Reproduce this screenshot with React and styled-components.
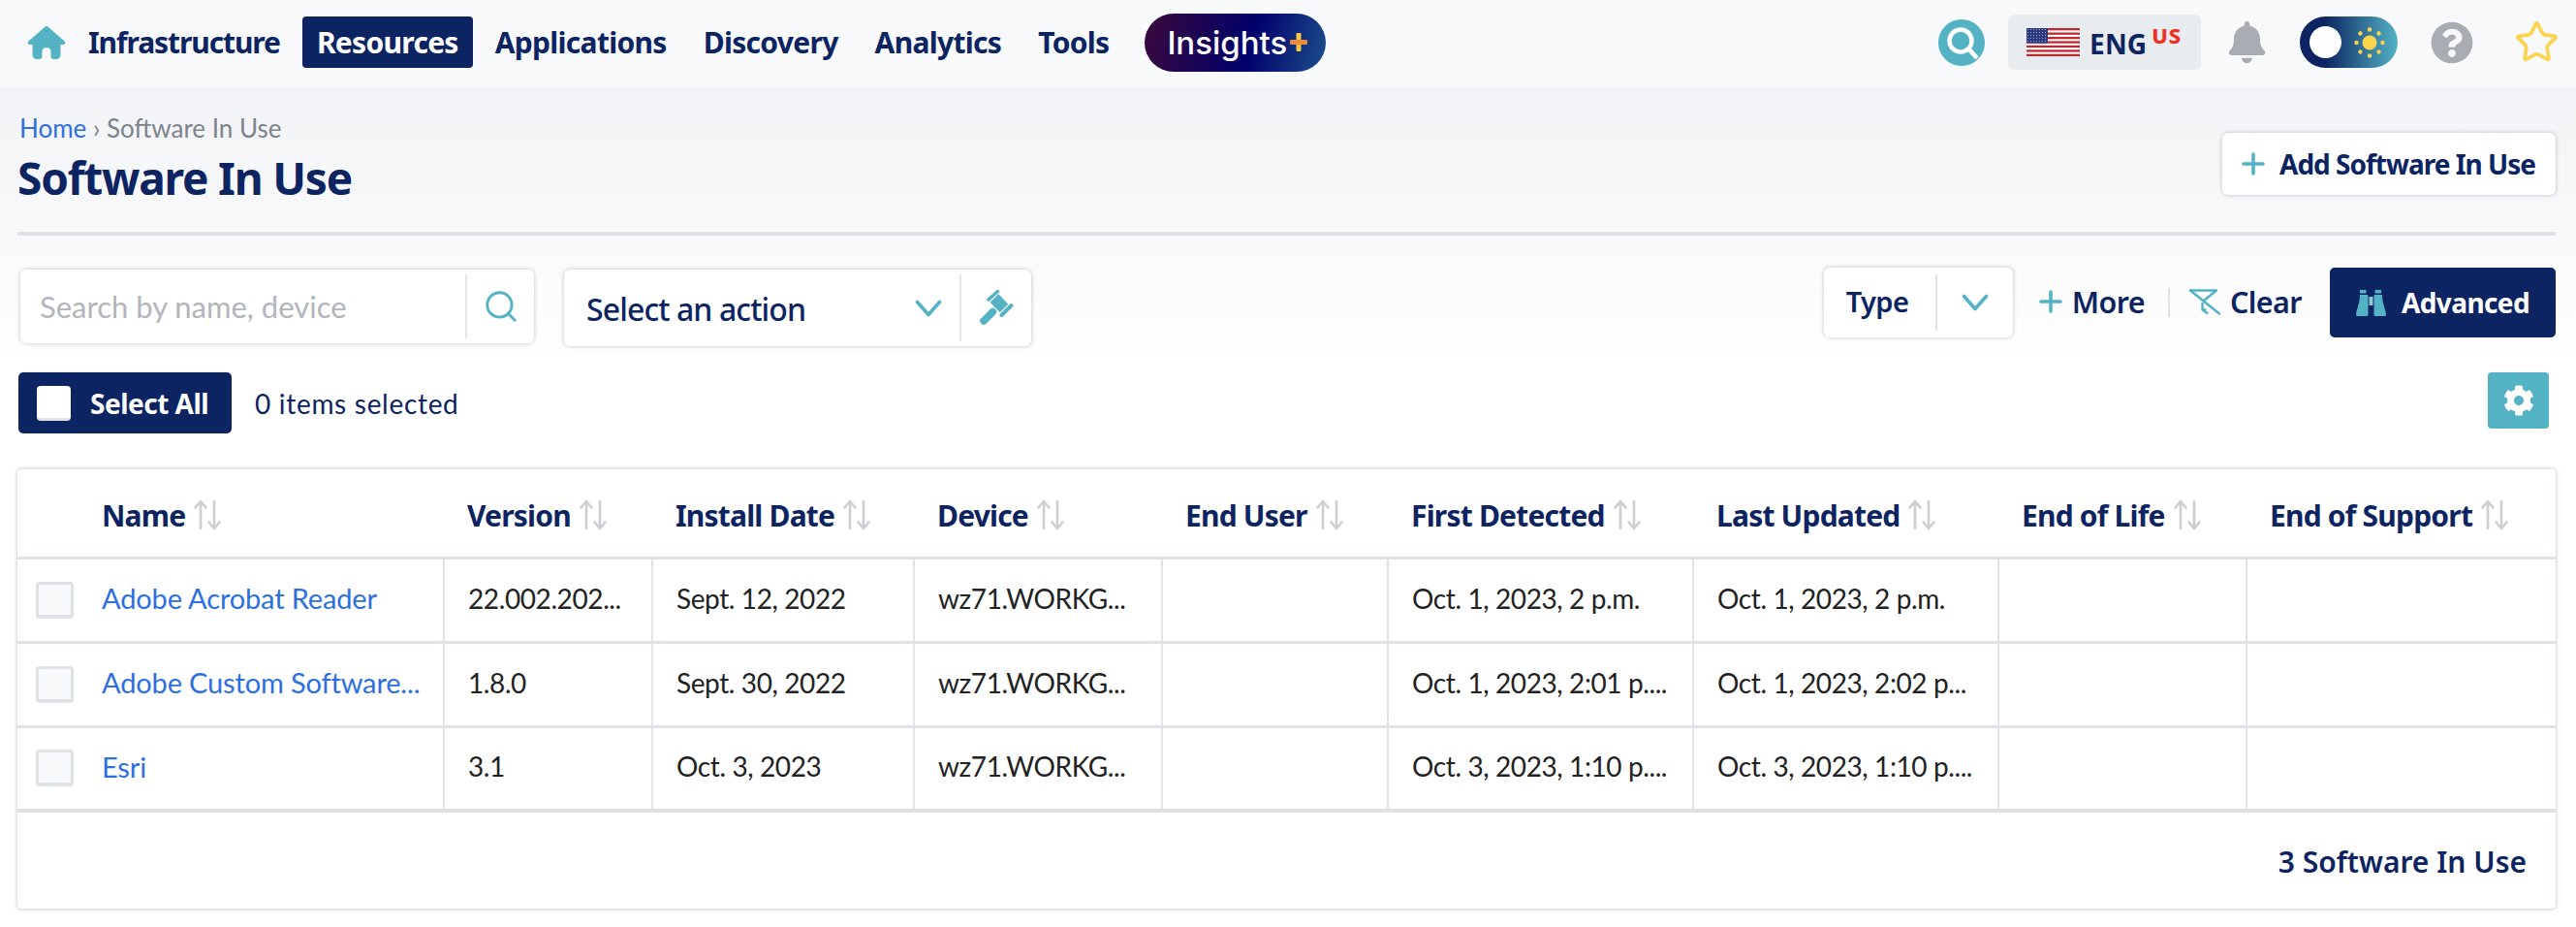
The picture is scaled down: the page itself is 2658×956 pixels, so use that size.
import styled, { createGlobalStyle } from "styled-components";
import { FaBell, FaQuestionCircle, FaCog } from "react-icons/fa";
import { Search, Star } from "lucide-react";

const HEAD = `"Noto Sans", "Open Sans", sans-serif`;
const BODY = `Lato, "Liberation Sans", sans-serif`;
const NAVY = "#0c2461";
const TEAL = "#53b3c5";
const LINE = "#e1e3e8";

const GlobalStyle = createGlobalStyle`
  html, body {
    margin: 0;
    background: #fff;
  }
  * {
    box-sizing: border-box;
  }
`;

const Page = styled.div`
  width: 2658px;
  height: 956px;
  overflow: hidden;
  background: linear-gradient(#f2f3f6 90px, #ffffff 380px);
  font-family: ${BODY};
  color: #222;
`;

const TopBar = styled.nav`
  height: 90px;
  background: #f8f9fb;
  display: flex;
  align-items: center;
  padding: 0 21px 3px 28px;
`;

const NavLinks = styled.div`
  display: flex;
  align-items: center;
  gap: 8px;
  margin-left: 8px;
`;

const NavLink = styled.a`
  height: 53px;
  padding: 0 15px;
  display: flex;
  align-items: center;
  border-radius: 4px;
  font: 700 30px ${HEAD};
  letter-spacing: ${(p) => p.$ls || -0.7}px;
  white-space: nowrap;
  color: ${(p) => (p.$active ? "#fff" : NAVY)};
  background: ${(p) => (p.$active ? NAVY : "transparent")};
`;

const InsightsPill = styled.a`
  width: 187px;
  height: 60px;
  margin-left: 22px;
  border-radius: 30px;
  display: flex;
  align-items: center;
  justify-content: center;
  gap: 3px;
  padding-left: 4px;
  background: linear-gradient(105deg, #36083f 5%, #00006b 58%, #1d4f8c 100%);
  color: #fff;
  font: 500 33px Inter, ${BODY};
`;

const TopRight = styled.div`
  margin-left: auto;
  display: flex;
  align-items: center;
`;

const LangBox = styled.div`
  width: 199px;
  height: 57px;
  margin: 0 26px 0 24px;
  padding-left: 19px;
  display: flex;
  align-items: center;
  gap: 10px;
  border-radius: 6px;
  background: #e9ecef;
`;

const LangText = styled.span`
  font: 700 28px ${HEAD};
  color: ${NAVY};
  letter-spacing: 0.2px;
`;

const LangSup = styled.sup`
  font: 800 22px ${HEAD};
  color: #ee3124;
  letter-spacing: 0.8px;
  margin-left: 5px;
  position: relative;
  top: -1px;
`;

const BellWrap = styled.span`
  display: flex;
  color: #a9adb3;
  font-size: 43px;
`;

const Toggle = styled.div`
  width: 101px;
  height: 53px;
  margin: 0 34px 0 33px;
  padding: 0 13px 0 10px;
  border-radius: 27px;
  display: flex;
  align-items: center;
  justify-content: space-between;
  background: linear-gradient(90deg, #0c2461 25%, #53b3c5 100%);
`;

const Knob = styled.span`
  width: 33px;
  height: 33px;
  border-radius: 50%;
  background: #fff;
`;

const HelpWrap = styled.span`
  display: flex;
  color: #a9adb3;
  font-size: 44px;
  margin-right: 46px;
`;

const StarWrap = styled.span`
  display: flex;
  margin: 0 -4px;
`;

const Main = styled.main`
  padding: 0 21px 0 18px;
`;

const TitleRow = styled.header`
  height: 153px;
  padding: 28px 0 0 2px;
  display: flex;
  justify-content: space-between;
  border-bottom: 4px solid #e0e1e6;
`;

const Breadcrumb = styled.div`
  font: 400 26px ${BODY};
  color: #7c848c;
  height: 28px;
  line-height: 28px;
`;

const BreadcrumbLink = styled.a`
  color: #2d6fe0;
`;

const PageTitle = styled.h1`
  margin: 12px 0 0 -2px;
  font: 700 46px/50px ${HEAD};
  letter-spacing: -1.2px;
  color: ${NAVY};
`;

const WhiteBox = styled.div`
  background: #fff;
  border-radius: 6px;
  box-shadow: 0 0 4px rgba(40, 50, 70, 0.3);
  display: flex;
  align-items: center;
`;

const AddButton = styled(WhiteBox)`
  width: 344px;
  height: 64px;
  margin-top: 19px;
  padding-left: 20px;
  gap: 15px;
  font: 700 28px ${HEAD};
  letter-spacing: -1px;
  color: ${NAVY};
`;

const Toolbar = styled.div`
  margin-top: 33px;
  height: 81px;
  display: flex;
  align-items: flex-start;
`;

const SearchBox = styled(WhiteBox)`
  width: 530px;
  height: 76px;
  margin: 2px 0 0 3px;
`;

const Placeholder = styled.span`
  flex: 1;
  padding-left: 20px;
  font: 400 31px ${BODY};
  color: #b2b5bb;
`;

const Divider = styled.span`
  width: 2px;
  align-self: stretch;
  margin: ${(p) => p.$m || "5px 0"};
  background: #e3e4e8;
`;

const SearchIcon = styled.span`
  width: 69px;
  display: flex;
  justify-content: center;
  color: ${TEAL};
`;

const ActionBox = styled(WhiteBox)`
  width: 482px;
  height: 79px;
  margin: 2px 0 0 31px;
  padding-left: 23px;
`;

const ActionLabel = styled.span`
  flex: 1;
  padding-top: 2px;
  font: 500 32px ${HEAD};
  letter-spacing: -0.9px;
  color: ${NAVY};
`;

const IconCell = styled.span`
  display: flex;
  justify-content: center;
  width: ${(p) => p.$w}px;
  color: ${TEAL};
`;

const FilterGroup = styled.div`
  margin-left: auto;
  display: flex;
  align-items: center;
  height: 72px;
`;

const TypeBox = styled(WhiteBox)`
  width: 195px;
  height: 72px;
  padding-left: 23px;
`;

const TypeLabel = styled.span`
  flex: 1;
  padding-bottom: 3px;
  font: 600 29px ${HEAD};
  letter-spacing: -0.6px;
  color: ${NAVY};
`;

const TextButton = styled.span`
  display: flex;
  align-items: center;
  gap: 10px;
  padding-bottom: 2px;
  font: 600 30.5px ${HEAD};
  letter-spacing: -0.6px;
  color: ${NAVY};
`;

const MoreButton = styled(TextButton)`
  margin-left: 27px;
`;

const VRule = styled.span`
  width: 2px;
  height: 30px;
  margin: 0 20px 0 24px;
  background: #dfe1e6;
`;

const AdvancedButton = styled.button`
  width: 233px;
  height: 72px;
  margin-left: 29px;
  border: 0;
  border-radius: 5px;
  display: flex;
  align-items: center;
  justify-content: center;
  gap: 16px;
  background: ${NAVY};
  color: #fff;
  font: 700 28px ${HEAD};
  letter-spacing: -0.6px;
`;

const SelectionRow = styled.div`
  margin-top: 27px;
  height: 63px;
  display: flex;
  align-items: center;
`;

const SelectAll = styled.div`
  width: 220px;
  height: 63px;
  margin-left: 1px;
  padding-left: 19px;
  border-radius: 5px;
  display: flex;
  align-items: center;
  gap: 20px;
  background: ${NAVY};
  color: #fff;
  font: 700 28px ${HEAD};
  letter-spacing: -0.5px;
`;

const SelectCheck = styled.span`
  width: 35px;
  height: 36px;
  border-radius: 4px;
  background: #fff;
  border-bottom: 3px solid #dee2e6;
`;

const SelectedCount = styled.span`
  margin-left: 24px;
  font: 400 28px ${BODY};
  letter-spacing: 0.7px;
  color: ${NAVY};
`;

const GearButton = styled.div`
  width: 63px;
  height: 58px;
  margin: 0 7px 5px auto;
  border-radius: 4px;
  display: flex;
  align-items: center;
  justify-content: center;
  background: ${TEAL};
  color: #fff;
  font-size: 32px;
`;

const TableCard = styled.section`
  margin-top: 37px;
  height: 453px;
  background: #fff;
  border-radius: 4px;
  box-shadow: 0 0 4px rgba(40, 50, 70, 0.35);
  display: flex;
  flex-direction: column;
`;

const Table = styled.table`
  width: 100%;
  table-layout: fixed;
  border-collapse: collapse;
`;

const HeadCell = styled.th`
  height: 91px;
  padding: 5px 0 0 ${(p) => p.$pad || 24}px;
  text-align: left;
  font: 700 30px ${HEAD};
  letter-spacing: -0.8px;
  color: ${NAVY};
  white-space: nowrap;
  border-bottom: 3px solid #dee2e6;
`;

const HeadInner = styled.span`
  display: flex;
  align-items: center;
  gap: 8px;
`;

const Row = styled.tr`
  height: 87px;
  border-bottom: ${(p) => (p.$last ? 4 : 3)}px solid #dee2e6;
`;

const Cell = styled.td`
  padding: 0 0 4px 24px;
  font: 400 28px ${BODY};
  letter-spacing: -0.4px;
  color: #222;
  white-space: nowrap;
  overflow: hidden;
  border-left: 2px solid ${LINE};
`;

const NameCell = styled.td`
  padding: 0 0 0 19px;
  white-space: nowrap;
  overflow: hidden;
`;

const NameInner = styled.span`
  display: flex;
  align-items: center;
  gap: 29px;
`;

const RowCheck = styled.span`
  width: 39px;
  height: 38px;
  flex: none;
  border-radius: 4px;
  background: #f8f9fa;
  border: 3px solid #dee2e6;
  border-bottom-width: 4px;
`;

const NameLink = styled.a`
  margin-bottom: 4px;
  font: 400 29px ${BODY};
  letter-spacing: -0.15px;
  color: #2d6fe0;
`;

const TableFooter = styled.div`
  flex: 1;
  display: flex;
  align-items: center;
  justify-content: flex-end;
  padding: 2px 30px 0 0;
  font: 600 30px ${HEAD};
  color: ${NAVY};
`;

const SortArrows = () => (
  <svg width="30" height="32" viewBox="0 0 30 32" fill="none" strokeWidth="2.6" strokeLinecap="round" strokeLinejoin="round" stroke="#ccced2">
    <path d="M8 30V2M2.500 8.500 8 2l5.500 6.500" />
    <path d="M22 2v28M16.500 23.500 22 30l5.500-6.500" />
  </svg>
);

const HomeIcon = () => (
  <svg width="40" height="34" viewBox="0 0 40 34" fill={TEAL}>
    <path d="M18.500 0.800a2 2 0 0 1 3 0L38.600 15.500c1.200 1.200 0.500 3.500-1.500 3.500H34.500V29c0 3-2 5-5 5h-2c-1.700 0-3-1.300-3-3v-5c0-2.500-2-4-4.500-4s-4.500 1.500-4.500 4v5c0 1.700-1.300 3-3 3h-2c-3 0-5-2-5-5V19H2.900c-2 0-2.700-2.300-1.500-3.500z" />
  </svg>
);

const FlagIcon = () => (
  <svg width="55" height="29" viewBox="0 0 55 29">
    <defs>
      <pattern id="stars" width="3" height="3" patternUnits="userSpaceOnUse">
        <rect width="3" height="3" fill="#2e3a80" />
        <rect x="1" y="1" width="1" height="1" fill="#9aa2cc" />
      </pattern>
    </defs>
    <rect width="55" height="29" fill="#fff" />
    {[0, 4.500, 9, 13.400, 17.800, 22.300, 26.700].map((y) => (
      <rect key={y} y={y} width="55" height="2.300" fill="#c1272d" />
    ))}
    <rect width="22" height="15.500" fill="url(#stars)" />
  </svg>
);

const SearchBadge = () => (
  <svg width="48" height="48" viewBox="0 0 48 48">
    <circle cx="24" cy="24" r="24" fill={TEAL} />
    <circle cx="23" cy="22" r="11.500" fill="none" stroke="#fff" strokeWidth="4.500" />
    <path d="M31 30l9 10" stroke="#fff" strokeWidth="4.500" />
  </svg>
);

const SunIcon = () => (
  <svg width="32" height="32" viewBox="0 0 32 32" fill="#fbd34d">
    <circle cx="16" cy="16" r="7.500" />
    {[0, 45, 90, 135, 180, 225, 270, 315].map((a) => (
      <circle key={a} cx="16" cy="2.500" r="2.200" transform={`rotate(${a} 16 16)`} />
    ))}
  </svg>
);

const InsightsPlus = () => (
  <svg width="18" height="19" viewBox="0 0 18 19">
    <rect x="6.500" width="5" height="19" rx="1" fill="#f7c844" />
    <rect y="7" width="18" height="5" rx="1" fill="#ee8a3c" />
  </svg>
);

const PlusIcon = () => (
  <svg width="24" height="24" viewBox="0 0 24 24" stroke={TEAL} strokeWidth="3.600" strokeLinecap="round">
    <path d="M12 2v20M2 12h20" />
  </svg>
);

const Chevron = () => (
  <svg width="28" height="18" viewBox="0 0 28 18" fill="none" stroke={TEAL} strokeWidth="3.600" strokeLinecap="round" strokeLinejoin="round">
    <path d="M2.500 2.500 14 15.500 25.500 2.500" />
  </svg>
);

const GavelIcon = () => (
  <svg width="36" height="37" viewBox="0 0 36 37" fill="none" stroke={TEAL} strokeLinecap="round">
    <path d="M10 10 19.500 1.500" strokeWidth="3.600" />
    <path d="M23.500 26 33.500 16" strokeWidth="4" />
    <path d="M16 8.500 26 19" strokeWidth="12" strokeLinecap="butt" />
    <path d="M14.500 22.500 5 32" strokeWidth="7.500" />
  </svg>
);

const ClearFilterIcon = () => (
  <svg width="32" height="27" viewBox="0 0 32 27" fill="none" stroke={TEAL} strokeWidth="2.400" strokeLinecap="round" strokeLinejoin="round">
    <path d="M1 1.500h27L15 12" />
    <path d="M1 1.500 31 25.500" />
    <path d="M13.500 15v6.500l5 3.500M13.500 21.500h3" />
  </svg>
);

const BinocularsIcon = () => (
  <svg width="31" height="27" viewBox="0 0 31 27" fill={TEAL}>
    <path d="M4 0h6.500v3.500H4zM19.500 0H26v3.500h-6.500z" />
    <path d="M4 5h7.500a1 1 0 0 1 1 1v19.500a1.500 1.500 0 0 1-1.500 1.500H1.500A1.500 1.500 0 0 1 0 25.500c0-4 4-12 4-20.500z" />
    <path d="M27 5h-7.500a1 1 0 0 0-1 1v19.500a1.500 1.500 0 0 0 1.500 1.500h9.500a1.500 1.500 0 0 0 1.500-1.500c0-4-4-12-4-20.500z" />
    <rect x="13.500" y="7" width="4" height="9" fill="#8fc9d6" />
  </svg>
);

const columns = [
  { label: "Name", width: 440, pad: 87 },
  { label: "Version", width: 215 },
  { label: "Install Date", width: 270 },
  { label: "Device", width: 256 },
  { label: "End User", width: 233 },
  { label: "First Detected", width: 315 },
  { label: "Last Updated", width: 315 },
  { label: "End of Life", width: 256 },
  { label: "End of Support", width: 319 },
];

const rows = [
  ["Adobe Acrobat Reader", "22.002.202...", "Sept. 12, 2022", "wz71.WORKG...", "", "Oct. 1, 2023, 2 p.m.", "Oct. 1, 2023, 2 p.m.", "", ""],
  ["Adobe Custom Software...", "1.8.0", "Sept. 30, 2022", "wz71.WORKG...", "", "Oct. 1, 2023, 2:01 p....", "Oct. 1, 2023, 2:02 p...", "", ""],
  ["Esri", "3.1", "Oct. 3, 2023", "wz71.WORKG...", "", "Oct. 3, 2023, 1:10 p....", "Oct. 3, 2023, 1:10 p....", "", ""],
];

const App = () => {
  return (
    <Page>
      <GlobalStyle />
      <TopBar>
        <HomeIcon />
        <NavLinks>
          <NavLink $ls={-1.1}>Infrastructure</NavLink>
          <NavLink $active>Resources</NavLink>
          <NavLink>Applications</NavLink>
          <NavLink>Discovery</NavLink>
          <NavLink>Analytics</NavLink>
          <NavLink>Tools</NavLink>
        </NavLinks>
        <InsightsPill>
          Insights
          <InsightsPlus />
        </InsightsPill>
        <TopRight>
          <SearchBadge />
          <LangBox>
            <FlagIcon />
            <LangText>
              ENG<LangSup>US</LangSup>
            </LangText>
          </LangBox>
          <BellWrap>
            <FaBell />
          </BellWrap>
          <Toggle>
            <Knob />
            <SunIcon />
          </Toggle>
          <HelpWrap>
            <FaQuestionCircle />
          </HelpWrap>
          <StarWrap>
            <Star size={47} color="#fbd34d" strokeWidth={1.9} />
          </StarWrap>
        </TopRight>
      </TopBar>

      <Main>
        <TitleRow>
          <div>
            <Breadcrumb>
              <BreadcrumbLink>Home</BreadcrumbLink> › Software In Use
            </Breadcrumb>
            <PageTitle>Software In Use</PageTitle>
          </div>
          <AddButton>
            <PlusIcon />
            Add Software In Use
          </AddButton>
        </TitleRow>

        <Toolbar>
          <SearchBox>
            <Placeholder>Search by name, device</Placeholder>
            <Divider />
            <SearchIcon>
              <Search size={38} strokeWidth={1.8} />
            </SearchIcon>
          </SearchBox>
          <ActionBox>
            <ActionLabel>Select an action</ActionLabel>
            <IconCell $w={64}>
              <Chevron />
            </IconCell>
            <Divider />
            <IconCell $w={72}>
              <GavelIcon />
            </IconCell>
          </ActionBox>
          <FilterGroup>
            <TypeBox>
              <TypeLabel>Type</TypeLabel>
              <Divider $m="7px 0" />
              <IconCell $w={78}>
                <Chevron />
              </IconCell>
            </TypeBox>
            <MoreButton>
              <PlusIcon />
              More
            </MoreButton>
            <VRule />
            <TextButton>
              <ClearFilterIcon />
              Clear
            </TextButton>
            <AdvancedButton>
              <BinocularsIcon />
              Advanced
            </AdvancedButton>
          </FilterGroup>
        </Toolbar>

        <SelectionRow>
          <SelectAll>
            <SelectCheck />
            Select All
          </SelectAll>
          <SelectedCount>0 items selected</SelectedCount>
          <GearButton>
            <FaCog />
          </GearButton>
        </SelectionRow>

        <TableCard>
          <Table>
            <colgroup>
              {columns.map((col) => (
                <col key={col.label} width={col.width} />
              ))}
            </colgroup>
            <thead>
              <tr>
                {columns.map((col) => (
                  <HeadCell key={col.label} $pad={col.pad}>
                    <HeadInner>
                      {col.label}
                      <SortArrows />
                    </HeadInner>
                  </HeadCell>
                ))}
              </tr>
            </thead>
            <tbody>
              {rows.map((row, i) => (
                <Row key={row[0]} $last={i === rows.length - 1}>
                  <NameCell>
                    <NameInner>
                      <RowCheck />
                      <NameLink>{row[0]}</NameLink>
                    </NameInner>
                  </NameCell>
                  {row.slice(1).map((val, j) => (
                    <Cell key={j}>{val}</Cell>
                  ))}
                </Row>
              ))}
            </tbody>
          </Table>
          <TableFooter>3 Software In Use</TableFooter>
        </TableCard>
      </Main>
    </Page>
  );
};

export default App;
